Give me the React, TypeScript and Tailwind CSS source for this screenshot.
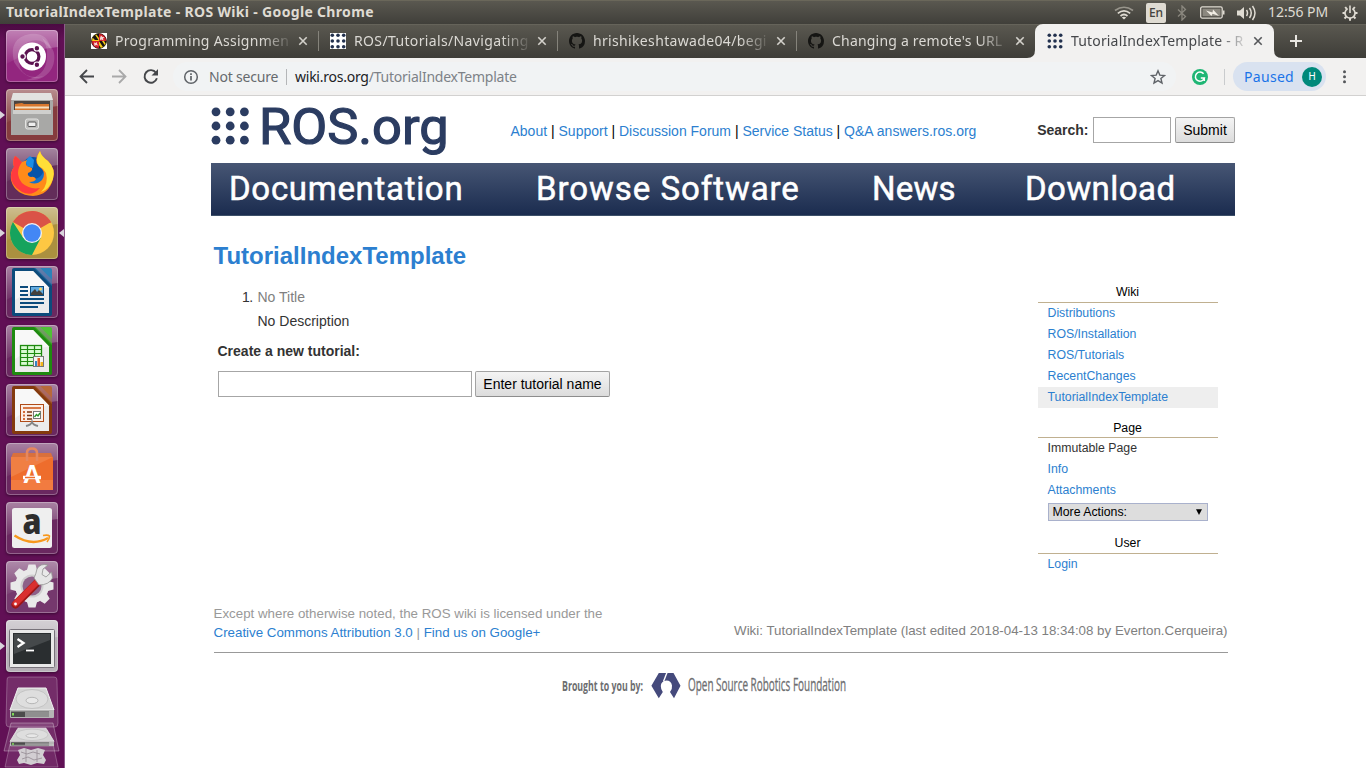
import React from "react";

const ui = "font-['Noto_Sans',sans-serif]";
const sans = "font-['Liberation_Sans',Arial,sans-serif]";

function Tile({ bg, children, running, focused }: { bg: string; children: React.ReactNode; running?: boolean; focused?: boolean }) {
  return (
    <div className="relative flex h-[52px] w-[65px] shrink-0 justify-center pr-px">
      <div className={`h-[52px] w-[52px] rounded-[4px] shadow-[0_1px_3px_rgba(0,0,0,0.4)] ${bg}`}>
        <svg width="52" height="52" viewBox="0 0 52 52" className="block overflow-visible">
          <defs>
            <linearGradient id="gloss" x1="0" y1="0" x2="0" y2="1">
              <stop offset="0" stopColor="#fff" stopOpacity=".42" />
              <stop offset="1" stopColor="#fff" stopOpacity=".04" />
            </linearGradient>
          </defs>
          <path d="M0 4Q0 0 4 0H48Q52 0 52 4V17Q26 19 0 34Z" fill="url(#gloss)" />
          {children}
          <rect x=".5" y=".5" width="51" height="51" rx="3.5" fill="none" stroke="#fff" strokeOpacity=".28" />
        </svg>
      </div>
      {running && (
        <svg className="absolute top-[21px] left-0" width="6" height="10" viewBox="0 0 6 10">
          <path d="M0 1L5 5L0 9Z" fill="#d9d4dc" />
        </svg>
      )}
      {focused && (
        <svg className="absolute top-[21px] right-px" width="6" height="10" viewBox="0 0 6 10">
          <path d="M6 1L1 5L6 9Z" fill="#d9d4dc" />
        </svg>
      )}
    </div>
  );
}

function OfficePage({ dark, light, children }: { dark: string; light: string; children: React.ReactNode }) {
  return (
    <>
      <path d="M8 2H29.500L46 18.500V48Q46 50 44 50H8Q6 50 6 48V4Q6 2 8 2Z" fill={dark} />
      <path d="M28 2H34L46 14V20Z" fill={light} opacity=".55" />
      <path d="M34 2H44Q46 2 46 4V14Z" fill={light} />
      <path d="M9 5H27L43 21.500V47H9Z" fill="#ececec" />
      <path d="M9 5H27L43 21.500Q22 24 9 34Z" fill="#f8f8f8" />
      {children}
    </>
  );
}

function Drive() {
  return (
    <>
      <path d="M9 2H37L45 24H1Z" fill="#d4d4d4" stroke="#f1f1f1" />
      <ellipse cx="23" cy="13" rx="16" ry="9.500" fill="#dedede" stroke="#c3c3c3" />
      <ellipse cx="23" cy="14.500" rx="6" ry="3.200" fill="#e8e8e8" stroke="#aaa" strokeWidth=".8" />
      <path d="M1 24H45V31Q45 32 44 32H2Q1 32 1 31Z" fill="#b5b5b5" />
      <path d="M2 25.500H40V31H2Z" fill="#4c4c4c" />
      <path d="M16 25.500H40V31H16Z" fill="#8f8f8f" />
      <rect x="3" y="27" width="2" height="2.500" fill="#7ed957" />
    </>
  );
}

function Launcher() {
  return (
    <aside className="flex w-[65px] shrink-0 flex-col gap-[7px] border-r border-[#8c5a8a] bg-[#611055] bg-gradient-to-b from-[#4b0a42] via-[#611055] via-[2%] to-[#611055] pt-[6px]">
      <Tile bg="bg-[#93267f]">
        <path d="M8 32Q2 8 24 4Q42 2 45 20Q36 6 22 12Q10 18 14 38Q20 50 38 46Q22 54 8 32Z" fill="#fff" opacity=".16" />
        <path d="M36 8Q54 20 46 38Q38 52 20 50Q40 46 41 28Q42 16 36 8Z" fill="#fff" opacity=".16" />
        <circle cx="26" cy="26.500" r="14" fill="#fff" />
        <circle cx="26" cy="26.500" r="6.900" fill="none" stroke="#5c1350" strokeWidth="3.200" />
        <g fill="#5c1350" stroke="#fff" strokeWidth="1.200">
          <circle cx="16.500" cy="26.500" r="2.800" />
          <circle cx="30.900" cy="18.200" r="2.800" />
          <circle cx="30.900" cy="34.800" r="2.800" />
        </g>
      </Tile>
      <Tile bg="bg-[#853c3e]" running>
        <path d="M7 4H45L47 13V46H5V13Z" fill="#a9a9a7" />
        <path d="M7 4H45L47 11H5Z" fill="#e2e2e0" />
        <path d="M8 12H44V22H8Z" fill="#4b4440" />
        <path d="M9 15L16 14L18 15H43V21H9Z" fill="#d9782f" />
        <path d="M9 17.500H43V19.500H9Z" fill="#f6dfc0" />
        <path d="M7 21H45V46H7Z" fill="#a8a8a6" />
        <path d="M7 21H45V25H7Z" fill="#cfcfcd" />
        <rect x="19.500" y="30" width="13" height="10" rx="2" fill="#bdbdbb" stroke="#e3e3e1" />
        <rect x="22" y="33" width="8" height="4.500" rx="1" fill="#eee" stroke="#555" />
      </Tile>
      <Tile bg="bg-[#632d5a]">
        <circle cx="26" cy="27" r="16" fill="#1672c9" />
        <circle cx="27" cy="20" r="11" fill="#0754a9" />
        <path d="M24 8Q18 12 21 18L27 20L28 12Z" fill="#1b8ee6" />
        <path d="M9 8C13 10 14 13 16 14L21 12Q19 15 21 18L26 20Q27 23 22 25Q21 28 25 29Q28 28 30 31Q29 34 23 34Q30 38 36 32Q40 26 36 21Q28 16 31 8Q33 4 34 3Q35 8 42 13Q50 21 47 31Q43 47 27 48Q9 47 5 32Q4 24 8 19Q6 13 9 8Z" fill="#ff8b19" />
        <path d="M9 8C13 10 14 13 16 14Q8 25 16 35Q24 42 34 40Q26 49 16 44Q4 37 5 27Q6 21 8 19Q6 13 9 8Z" fill="#ff3a3e" />
        <path d="M34 3Q35 8 42 13Q50 21 47 31Q43 42 35 44Q43 36 40 25Q37 20 33 18Q28 12 34 3Z" fill="#ffdf37" />
      </Tile>
      <Tile bg="bg-[#ab903f]" running focused>
        <circle cx="26" cy="26" r="22" fill="#fdc743" />
        <path d="M26 26L6.950 15A22 22 0 0 1 45.050 15Z" fill="#da5347" />
        <path d="M26 4A22 22 0 0 1 45.050 16H26Z" fill="#da5347" />
        <path d="M6.950 15A22 22 0 0 0 26 48L34.700 31L17.300 31Z" fill="#16a35d" />
        <circle cx="26" cy="26" r="10" fill="#f2f2f2" />
        <circle cx="26" cy="26" r="8.700" fill="#4387f5" />
      </Tile>
      <Tile bg="bg-[#6a2860]">
        <OfficePage dark="#0c4b7b" light="#2c82b8">
          <path d="M14 21H22M14 25H22M14 29H22M14 33H38M14 37H38M14 41H32" stroke="#0c4b7b" strokeWidth="1.900" />
          <rect x="24.500" y="20.500" width="13" height="9" fill="#61abe0" stroke="#0c4b7b" />
          <path d="M25 29V27L29 23L31 26L33 24L37 28V29Z" fill="#45413c" />
          <circle cx="34.500" cy="23" r="1.500" fill="#ffd65a" />
        </OfficePage>
      </Tile>
      <Tile bg="bg-[#6a2860]">
        <OfficePage dark="#1f8a10" light="#4fc136">
          <rect x="14.500" y="20.500" width="21" height="20" fill="#d9fad2" stroke="#1f8a10" strokeWidth="1.300" />
          <path d="M14 24.500H36M14 28.500H36M14 32.500H36M14 36.500H36M21.500 20V41M28.500 20V41" stroke="#1f8a10" strokeWidth="1.200" />
          <rect x="27.500" y="31.500" width="10" height="10" fill="#f4f4f4" stroke="#777" />
          <path d="M29 36H31V41H29Z" fill="#3584c5" />
          <path d="M31.500 33H34V41H31.500Z" fill="#e35d22" />
          <path d="M34.500 37H37V41H34.500Z" fill="#f3b51b" />
        </OfficePage>
      </Tile>
      <Tile bg="bg-[#6a2860]">
        <OfficePage dark="#843a0e" light="#b8683a">
          <rect x="14.500" y="20.500" width="23" height="17" fill="#fbeee6" stroke="#b04b17" />
          <path d="M17 24H35" stroke="#d36a35" strokeWidth="1.800" />
          <path d="M17 28H19M17 31.500H19M17 35H19" stroke="#d36a35" strokeWidth="2" />
          <path d="M21 28H26M21 31.500H26M21 35H26" stroke="#7c3510" strokeWidth="1.700" />
          <rect x="27.500" y="27.500" width="7" height="7" fill="#fff" stroke="#777" />
          <path d="M28.500 33L30.500 30.500L32 32L34 29" stroke="#29962d" strokeWidth="1.400" fill="none" />
          <path d="M20 42Q25 41 26 38Q27 41 32 42" stroke="#858585" strokeWidth="2" fill="none" />
        </OfficePage>
      </Tile>
      <Tile bg="bg-[#6a2860]">
        <path d="M7 10H45L47 15V47H5V15Z" fill="#d9703c" />
        <path d="M5 14H47V47H5Z" fill="#ee6d2c" />
        <path d="M5 14H47L5 34Z" fill="#f07f43" />
        <path d="M5 37H47V47H5Z" fill="#f27b40" />
        <path d="M21 18V10Q21 5.500 26 5.500Q31 5.500 31 10V18" fill="none" stroke="#e5875f" strokeWidth="2.600" />
        <text x="26" y="40" textAnchor="middle" fontFamily="Liberation Sans" fontWeight="700" fontSize="25" fill="#fff">A</text>
        <path d="M17 34.500H35" stroke="#fff" strokeWidth="3.500" />
        <path d="M19 34.500H29" stroke="#ee6d2c" strokeWidth="1.500" />
      </Tile>
      <Tile bg="bg-[#6a2860]">
        <rect x="6" y="6" width="40" height="40" rx="2.500" fill="#efefef" />
        <text x="26" y="32" textAnchor="middle" fontFamily="Open Sans" fontWeight="800" fontSize="35" fill="#2d2d2d" textLength="19" lengthAdjust="spacingAndGlyphs">a</text>
        <path d="M8.500 33.500Q26 45 42 36" fill="none" stroke="#f7981d" strokeWidth="2.400" />
        <path d="M37 33.500Q42 32.500 43.500 34Q43.500 37 41 40" fill="none" stroke="#f7981d" strokeWidth="1.600" />
      </Tile>
      <Tile bg="bg-[#75386d]">
        <g fill="#e9e9e9">
          <circle cx="26" cy="25" r="17" />
          {[0, 45, 90, 135, 180, 225, 270, 315].map((a) => (
            <path key={a} d="M21 9L22.500 3.500H29.500L31 9Z" transform={`rotate(${a} 26 25)`} />
          ))}
        </g>
        <circle cx="26" cy="25" r="11.500" fill="#cfcfcf" />
        <circle cx="26" cy="25" r="9.500" fill="#8d6088" />
        <path d="M9.500 43.500L32 21" stroke="#9e1717" strokeWidth="8" strokeLinecap="round" />
        <path d="M9.500 42.500L31.500 20.500" stroke="#d93030" strokeWidth="6" strokeLinecap="round" />
        <path d="M28 17L33 24Q43 24 46.500 17L45.500 11L40 16L36 13.500L37 8L42 4Q34 2 31 8Q30 13 28 17Z" fill="#e6e6e6" stroke="#929292" strokeWidth=".8" />
        <circle cx="9.500" cy="43" r="1.400" fill="#fff" />
      </Tile>
      <Tile bg="bg-[#b5afb6]" running>
        <rect x="3.500" y="9.500" width="45" height="38" rx="1" fill="#e9e9e9" stroke="#77727a" />
        <rect x="7" y="13" width="38" height="31" fill="#2a2e30" />
        <path d="M8 14H44V20L8 34Z" fill="#45494b" />
        <path d="M11.500 19L17.500 23L11.500 27" fill="none" stroke="#fff" strokeWidth="2.300" />
        <path d="M20 30.500H28" stroke="#fff" strokeWidth="1.800" />
      </Tile>
      <svg width="64" height="92" viewBox="0 0 64 92" className="-mt-[3px] block shrink-0">
        <path d="M9 1H54Q57 1 57 4L58 47Q58 51 55 51H9Q6 51 6 47L7 4Q7 1 9 1Z" fill="#fff" fillOpacity=".12" stroke="#fff" strokeOpacity=".25" />
        <g transform="translate(9 10)"><Drive /></g>
        <path d="M11 47H53L59 75H4Z" fill="#fff" fillOpacity=".12" stroke="#fff" strokeOpacity=".3" />
        <g transform="translate(9 51) scale(1 .6)"><Drive /></g>
        <path d="M10 68L5 91H58L53 68" fill="#fff" fillOpacity=".1" stroke="#fff" strokeOpacity=".25" />
        <path d="M18 74L24 72L31 74L38 72L45 74L43 79L46 84L44 88L37 87L31 89L24 87L19 88L17 84L20 79Z" fill="#d2ced2" />
        <path d="M21 76L27 78L33 76L40 78M22 83L28 81L34 84L42 82M26 73V86M37 74V86" stroke="#9b929a" fill="none" strokeWidth=".9" />
      </svg>
    </aside>
  );
}

function TopBar() {
  return (
    <header className={`flex h-6 shrink-0 items-center border-t border-[#6a675a] bg-gradient-to-b from-[#5a5850] to-[#403f3a] pl-[6px] text-[#dfdbd2] ${ui}`}>
      <span className="-mt-[2px] text-[14px] leading-none font-bold tracking-[0.33px] whitespace-nowrap">TutorialIndexTemplate - ROS Wiki - Google Chrome</span>
      <div className="ml-auto flex h-full items-center">
        <svg width="20" height="14" viewBox="0 0 20 14" fill="none" strokeWidth="1.700">
          <path d="M1 4.500Q10 -2 19 4.500" stroke="#98958c" />
          <path d="M3.800 7.300Q10 2.500 16.200 7.300M6.500 10Q10 7 13.500 10" stroke="#dfdbd2" />
          <path d="M10 13.500L7.800 11.500Q10 10 12.200 11.500Z" fill="#dfdbd2" />
        </svg>
        <span className="ml-3 flex h-5 w-5 items-center justify-center rounded-[2px] bg-[#dfdbd2] text-[12px] leading-none font-medium text-[#43423d]">En</span>
        <svg className="ml-[11px]" width="10" height="16" viewBox="0 0 10 16" fill="none" stroke="#8b887f" strokeWidth="1.300">
          <path d="M1 4.500L8.500 11.500L5 15V1L8.500 4.500L1 11.500" />
        </svg>
        <svg className="ml-[13px]" width="25" height="13" viewBox="0 0 25 13">
          <rect x=".7" y=".9" width="21.500" height="11.200" rx="1.500" fill="none" stroke="#dfdbd2" strokeWidth="1.300" />
          <rect x="2.500" y="2.700" width="18" height="7.600" fill="#8b887f" />
          <path d="M23 4.500H24.500V8.500H23" fill="#dfdbd2" />
          <path d="M6 4.500L12.500 6.500L13 3.500L19 10L12.500 7.700L11.500 10Z" fill="#f2eee5" />
        </svg>
        <svg className="ml-[11px]" width="21" height="16" viewBox="0 0 21 16" fill="none" stroke="#dfdbd2" strokeWidth="1.500">
          <path d="M1 5.500H4L8 2V14L4 10.500H1Z" fill="#dfdbd2" stroke="none" />
          <path d="M10.500 5Q12.500 8 10.500 11M13.500 3Q17 8 13.500 13M16.500 1Q21.500 8 16.500 15" />
        </svg>
        <span className="-mt-px ml-[11px] w-[62px] text-[14px] leading-none tracking-[-0.05px] whitespace-nowrap">12:56 PM</span>
        <svg className="mr-2 ml-3" width="16" height="16" viewBox="0 0 16 16" fill="none" stroke="#dfdbd2" strokeWidth="1.600">
          <path d="M5.600 3.700A5 5 0 1 0 10.400 3.700M8 .5V8" />
          <path d="M3.200 2L4.800 4M12.800 2L11.200 4M.5 8H3M13 8H15.500M2.500 13.500L4.300 11.700M13.500 13.500L11.700 11.700M8 13V15.700" strokeWidth="2" />
        </svg>
      </div>
    </header>
  );
}

function DotsIcon({ white }: { white?: boolean }) {
  return (
    <svg width="16" height="16" viewBox="0 0 16 16" className="shrink-0">
      {white && <rect width="16" height="16" fill="#fff" />}
      {[2.3, 8, 13.7].map((y) => [2.3, 8, 13.7].map((x) => <circle key={`${x}-${y}`} cx={x} cy={y} r="1.800" fill="#22314e" />))}
    </svg>
  );
}

function MarylandIcon() {
  return (
    <svg width="16" height="16" viewBox="0 0 16 16" className="shrink-0">
      <rect width="16" height="16" fill="#fff" />
      <circle cx="8" cy="8" r="7.600" fill="#171311" />
      <path d="M8 .4A7.600 7.600 0 0 0 .4 8H8Z" fill="#f5cb18" />
      <path d="M1.500 4.500L4 1.800L7.500 7H4ZM5 1L8 .4V5Z" fill="#171311" />
      <path d="M8 .4A7.600 7.600 0 0 1 15.600 8H8Z" fill="#d8232c" />
      <path d="M10 2.500L11.500 4L13.500 4L12 5.500L12.500 7.500L10.500 6.500L9 7V5Z" fill="#f6d6d4" />
      <path d="M.4 8A7.600 7.600 0 0 0 8 15.600V8Z" fill="#d8232c" />
      <path d="M3 9.500L4.500 10L6 9V11L7.500 12.500L5 12L3.500 13Z" fill="#f6d6d4" />
      <path d="M15.600 8A7.600 7.600 0 0 1 8 15.600V8Z" fill="#f5cb18" />
      <path d="M8 8L12 14L14 12.500L11 8ZM13 8H15.600L15 11ZM8 12L10 15.300L8 15.600Z" fill="#171311" />
      <circle cx="8" cy="8" r="7.400" fill="none" stroke="#171311" strokeWidth=".6" />
    </svg>
  );
}

function GithubIcon() {
  return (
    <svg width="16" height="16" viewBox="0 0 16 16" className="shrink-0">
      <path fill="#151513" d="M8 0C3.580 0 0 3.580 0 8c0 3.540 2.290 6.530 5.470 7.590.4.070.55-.17.55-.38 0-.19-.01-.82-.01-1.490-2.010.37-2.530-.49-2.690-.94-.09-.23-.48-.94-.82-1.130-.28-.15-.68-.52-.01-.53.63-.01 1.080.58 1.230.82.72 1.210 1.870.87 2.330.66.07-.52.28-.87.51-1.070-1.780-.2-3.640-.89-3.640-3.950 0-.87.31-1.590.82-2.150-.08-.2-.36-1.020.08-2.120 0 0 .67-.21 2.200.82.64-.18 1.320-.27 2-.27s1.360.09 2 .27c1.530-1.040 2.200-.82 2.200-.82.44 1.100.16 1.920.08 2.120.51.56.82 1.270.82 2.150 0 3.070-1.870 3.750-3.650 3.950.29.25.54.73.54 1.480 0 1.070-.01 1.930-.01 2.200 0 .21.15.46.55.38A8.010 8.010 0 0 0 16 8c0-4.420-3.580-8-8-8z" />
    </svg>
  );
}

function Tab({ icon, label, active, divider, spacing }: { icon: React.ReactNode; label: string; active?: boolean; divider?: boolean; spacing: string }) {
  return (
    <div className={`relative flex h-[34px] w-[239px] shrink-0 items-center pl-3 ${active ? "rounded-t-[8px] bg-[#f2f1f0] text-[#45474a]" : "text-[#dbd9d4]"}`}>
      {icon}
      <span className={`ml-2 w-[175px] text-[14px] leading-[22px] whitespace-nowrap [mask-image:linear-gradient(to_right,#000_84%,transparent_102%)] ${spacing}`}>{label}</span>
      <svg className={`shrink-0 ${active ? "ml-1" : "ml-[5px]"}`} width="16" height="16" viewBox="0 0 16 16" stroke={active ? "#55575a" : "#d3d1cb"} strokeWidth="1.600">
        <path d="M4.300 4.300L11.700 11.700M11.700 4.300L4.300 11.700" />
      </svg>
      {divider && <span className="absolute top-[7px] -right-px h-5 w-px bg-[#85837b]" />}
      {active && (
        <>
          <svg className="absolute bottom-0 -left-2" width="8" height="8"><path d="M8 0V8H0Q8 8 8 0Z" fill="#f2f1f0" /></svg>
          <svg className="absolute -right-2 bottom-0" width="8" height="8"><path d="M0 0V8H8Q0 8 0 0Z" fill="#f2f1f0" /></svg>
        </>
      )}
    </div>
  );
}

function Toolbar() {
  return (
    <div className={`flex h-[38px] shrink-0 items-center border-b border-[#d2d1d0] bg-[#f2f1f0] pl-[14px] text-[14px] ${ui}`}>
      <svg width="16" height="16" viewBox="0 0 16 16" fill="none" stroke="#45474a" strokeWidth="1.800"><path d="M15 7.500H2M8 1L1.500 7.500L8 14" /></svg>
      <svg className="ml-4" width="16" height="16" viewBox="0 0 16 16" fill="none" stroke="#a9a9a9" strokeWidth="1.800"><path d="M1 7.500H14M8 1L14.500 7.500L8 14" /></svg>
      <svg className="ml-4" width="16" height="16" viewBox="0 0 16 16" fill="none" stroke="#45474a" strokeWidth="1.900">
        <path d="M13 3.800A6.300 6.300 0 1 0 13.900 9.300" />
        <path d="M15 0V6.500H8.500L11.300 3.700L12.500 2.700Z" fill="#45474a" stroke="none" />
      </svg>
      <div className="ml-[14px] flex h-[29px] w-[1003px] items-center rounded-full bg-[#f1f3f4] pr-[10px] pl-[10px]">
        <svg width="16" height="16" viewBox="0 0 16 16" fill="none" stroke="#5f6368" strokeWidth="1.500"><circle cx="8" cy="8" r="6.300" /><path d="M8 7V11.500M8 4.300V5.900" strokeWidth="1.700" /></svg>
        <span className="ml-[10px] w-[69px] tracking-[-0.2px] whitespace-nowrap text-[#666a6e]">Not secure</span>
        <span className="mr-2 ml-2 h-4 w-px bg-[#b4b6b8]" />
        <span className="tracking-[-0.24px] whitespace-nowrap text-[#7d8287]"><span className="text-[#202124]">wiki.ros.org</span>/TutorialIndexTemplate</span>
        <svg className="ml-auto" width="16" height="16" viewBox="0 0 16 16" fill="none" stroke="#5f6368" strokeWidth="1.400"><path d="M8 1.800L9.800 6.100L14.500 6.500L10.900 9.500L12 14L8 11.600L4 14L5.100 9.500L1.500 6.500L6.200 6.100Z" /></svg>
      </div>
      <svg className="ml-4" width="16" height="16" viewBox="0 0 16 16" fill="none" stroke="#fff">
        <circle cx="8" cy="8" r="8" fill="#1fb674" stroke="none" />
        <path d="M11.600 4.800A4.600 4.600 0 1 0 12.400 9H8.800M12.300 8.800V12" strokeWidth="1.500" />
      </svg>
      <span className="ml-4 h-4 w-px bg-[#c9cbcd]" />
      <div className="ml-2 flex h-[29px] w-[93px] items-center rounded-full bg-[#d9e2f0] pr-1 pl-[11px] text-[#1a73e8]">
        <span className="tracking-[0.3px]">Paused</span>
        <span className="ml-auto flex h-5 w-5 items-center justify-center rounded-full bg-[#00897b] font-['Roboto',sans-serif] text-[10px] text-white">H</span>
      </div>
      <svg className="ml-[10px]" width="16" height="16" viewBox="0 0 16 16" fill="#55575a"><circle cx="8.500" cy="2.800" r="1.500" /><circle cx="8.500" cy="7.800" r="1.500" /><circle cx="8.500" cy="12.800" r="1.500" /></svg>
    </div>
  );
}

const btn = "rounded-[2px] border border-[#a3a3a3] border-b-[#8d8d8d] bg-gradient-to-b from-[#f4f4f4] to-[#dcdcdc] text-black";

function SideHead({ children, cls }: { children: string; cls: string }) {
  return <h3 className={`border-b border-[#c0b090] pr-px text-center text-black ${cls}`}>{children}</h3>;
}

function Wiki() {
  return (
    <div className={`min-h-0 flex-1 overflow-hidden bg-white pl-[146px] text-[14px] text-[#333] ${sans}`}>
      <div className="flex w-[1024px] flex-col">
        <div className="flex h-[67px] items-start">
          <svg className="mt-[8px] overflow-visible" width="240" height="54" viewBox="0 0 240 54" fill="#2b3c61">
            {[7.800, 22, 36.200].map((y) => [5, 19.200, 33.400].map((x) => <circle key={`${x}-${y}`} cx={x} cy={y} r="4.400" />))}
            <text x="48" y="40.300" fontFamily="Roboto" fontWeight="400" fontSize="50.500" stroke="#2b3c61" strokeWidth="1.200" textLength="189.500" lengthAdjust="spacingAndGlyphs">ROS.org</text>
          </svg>
          <nav className="mt-[25px] ml-[59.500px] leading-5 whitespace-nowrap text-[#2c7fd0]">
            About <b className="font-normal text-black">|</b> Support <b className="font-normal text-black">|</b> Discussion Forum <b className="font-normal text-black">|</b> Service Status <b className="font-normal text-black">|</b> Q&amp;A answers.ros.org
          </nav>
          <form className="mt-[21px] ml-auto flex items-center">
            <label className="font-bold">Search:</label>
            <input className="ml-[4.500px] h-[26px] w-[78px] border border-[#a6a6a6] bg-white" />
            <button type="button" className={`ml-1 h-[26px] w-[60px] ${btn}`}>Submit</button>
          </form>
        </div>
        <div className="flex h-[53px] items-center border-b border-[#3d5069] bg-gradient-to-b from-[#475674] to-[#1b2c4f] pb-px pl-[18px] font-['Roboto',sans-serif] text-[33px] leading-none font-normal text-white [-webkit-text-stroke:0.5px_white]">
          <span className="w-[307px] tracking-[0.700px]">Documentation</span>
          <span className="w-[336px] tracking-[0.950px]">Browse Software</span>
          <span className="w-[153px] tracking-[0.200px]">News</span>
          <span className="tracking-[0.450px]">Download</span>
        </div>
        <div className="flex h-[388px] justify-between">
          <main className="pl-[3px]">
            <h1 className="mt-6 -ml-[0.500px] text-[24px] leading-8 font-bold text-[#2c7fd0]">TutorialIndexTemplate</h1>
            <ol className="mt-[13px] leading-6">
              <li className="flex"><span className="w-[43.500px] pr-[5px] text-right tracking-[-0.600px]">1.</span><span className="text-[#808080]">No Title</span></li>
              <li className="pl-[43.500px]">No Description</li>
            </ol>
            <p className="mt-[6px] pl-[3.500px] leading-6 font-bold">Create a new tutorial:</p>
            <form className="mt-2 flex pl-1">
              <input className="h-[26px] w-[254px] border border-[#a6a6a6] bg-white" />
              <button type="button" className={`ml-[3px] h-[26px] w-[135px] ${btn}`}>Enter tutorial name</button>
            </form>
          </main>
          <aside className="mr-[17px] w-[180px] pt-[66px] text-[12.300px] leading-[21px] text-[#2c7fd0]">
            <SideHead cls="h-[21px]">Wiki</SideHead>
            <ul>
              {["Distributions", "ROS/Installation", "ROS/Tutorials", "RecentChanges"].map((t) => <li key={t} className="h-[21px] pl-[9.500px]">{t}</li>)}
              <li className="h-[21px] bg-[#eee] pl-[9.500px]">TutorialIndexTemplate</li>
            </ul>
            <SideHead cls="mt-[9px] h-[21px] leading-[23px]">Page</SideHead>
            <ul>
              <li className="h-[21px] pl-[9.500px] text-[#333]">Immutable Page</li>
              <li className="h-[21px] pl-[9.500px]">Info</li>
              <li className="h-[21px] pl-[9.500px]">Attachments</li>
            </ul>
            <div className="mt-[2px] ml-[10px] flex h-[18px] w-[160px] items-center justify-between border border-[#a9b1cc] bg-[#ddd] pr-[5px] pl-[3.500px] text-black">
              More Actions:
              <svg width="6" height="6" viewBox="0 0 6 6"><path d="M0 .3H6L3 6Z" /></svg>
            </div>
            <SideHead cls="mt-3 h-[21px]">User</SideHead>
            <p className="pl-[9.500px]">Login</p>
          </aside>
        </div>
        <footer className="ml-[3px] w-[1014px] text-[13.330px] text-[#808080]">
          <div className="flex h-[49px] justify-between border-b border-[#999]">
            <p className="-ml-[0.500px] leading-[19px] text-[#999]">Except where otherwise noted, the ROS wiki is licensed under the<br /><span className="text-[#2c7fd0]">Creative Commons Attribution 3.0</span> | <span className="text-[#2c7fd0]">Find us on Google+</span></p>
            <p className="mt-[17px] mr-[0.500px] leading-[19px]">Wiki: TutorialIndexTemplate (last edited 2018-04-13 18:34:08 by Everton.Cerqueira)</p>
          </div>
          <svg className="mt-[15px] ml-[346px] block overflow-visible" width="292" height="34" viewBox="0 0 292 34" fill="#6d6e70" fontFamily="Open Sans">
            <text x="2" y="23" fontSize="15" fontWeight="700" textLength="81" lengthAdjust="spacingAndGlyphs">Brought to you by:</text>
            <path d="M98.800 5H113.500L120.500 17.700L114 30.300L110 24Q112.500 21 112 17.500Q111 12.500 106.500 12.500Q101 13 100.800 18Q100.800 21.500 102.800 24L98.800 30.300L91.400 17.700Z" fill="#454a7c" />
            <path d="M107 4.500L103.500 13.500" stroke="#fff" strokeWidth="1.400" />
            <text x="128" y="23" fontSize="18" fontWeight="500" stroke="#6d6e70" strokeWidth=".3" textLength="158" lengthAdjust="spacingAndGlyphs">Open Source Robotics Foundation</text>
          </svg>
        </footer>
      </div>
    </div>
  );
}

export default function App() {
  return (
    <div className="flex h-[768px] w-[1366px] flex-col overflow-hidden bg-white">
      <TopBar />
      <div className="flex min-h-0 flex-1">
        <Launcher />
        <div className="flex min-w-0 flex-1 flex-col">
          <div className={`flex h-[34px] shrink-0 border-t border-[#65635a] bg-gradient-to-b from-[#5a5850] to-[#3e3d38] pl-[14px] ${ui}`}>
            <div className="-mt-px flex">
              <Tab icon={<MarylandIcon />} label="Programming Assignmen" divider spacing="tracking-[0.3px]" />
              <Tab icon={<DotsIcon white />} label="ROS/Tutorials/Navigating" divider spacing="tracking-[0.36px]" />
              <Tab icon={<GithubIcon />} label="hrishikeshtawade04/begi" divider spacing="tracking-[0.34px]" />
              <Tab icon={<GithubIcon />} label="Changing a remote's URL" spacing="tracking-[0.2px]" />
              <Tab icon={<DotsIcon />} label="TutorialIndexTemplate - R" active spacing="tracking-[0.16px]" />
              <svg className="mt-[11px] ml-4" width="12" height="12" viewBox="0 0 12 12" stroke="#e8e6e1" strokeWidth="2"><path d="M6 0V12M0 6H12" /></svg>
            </div>
          </div>
          <Toolbar />
          <Wiki />
        </div>
      </div>
    </div>
  );
}
